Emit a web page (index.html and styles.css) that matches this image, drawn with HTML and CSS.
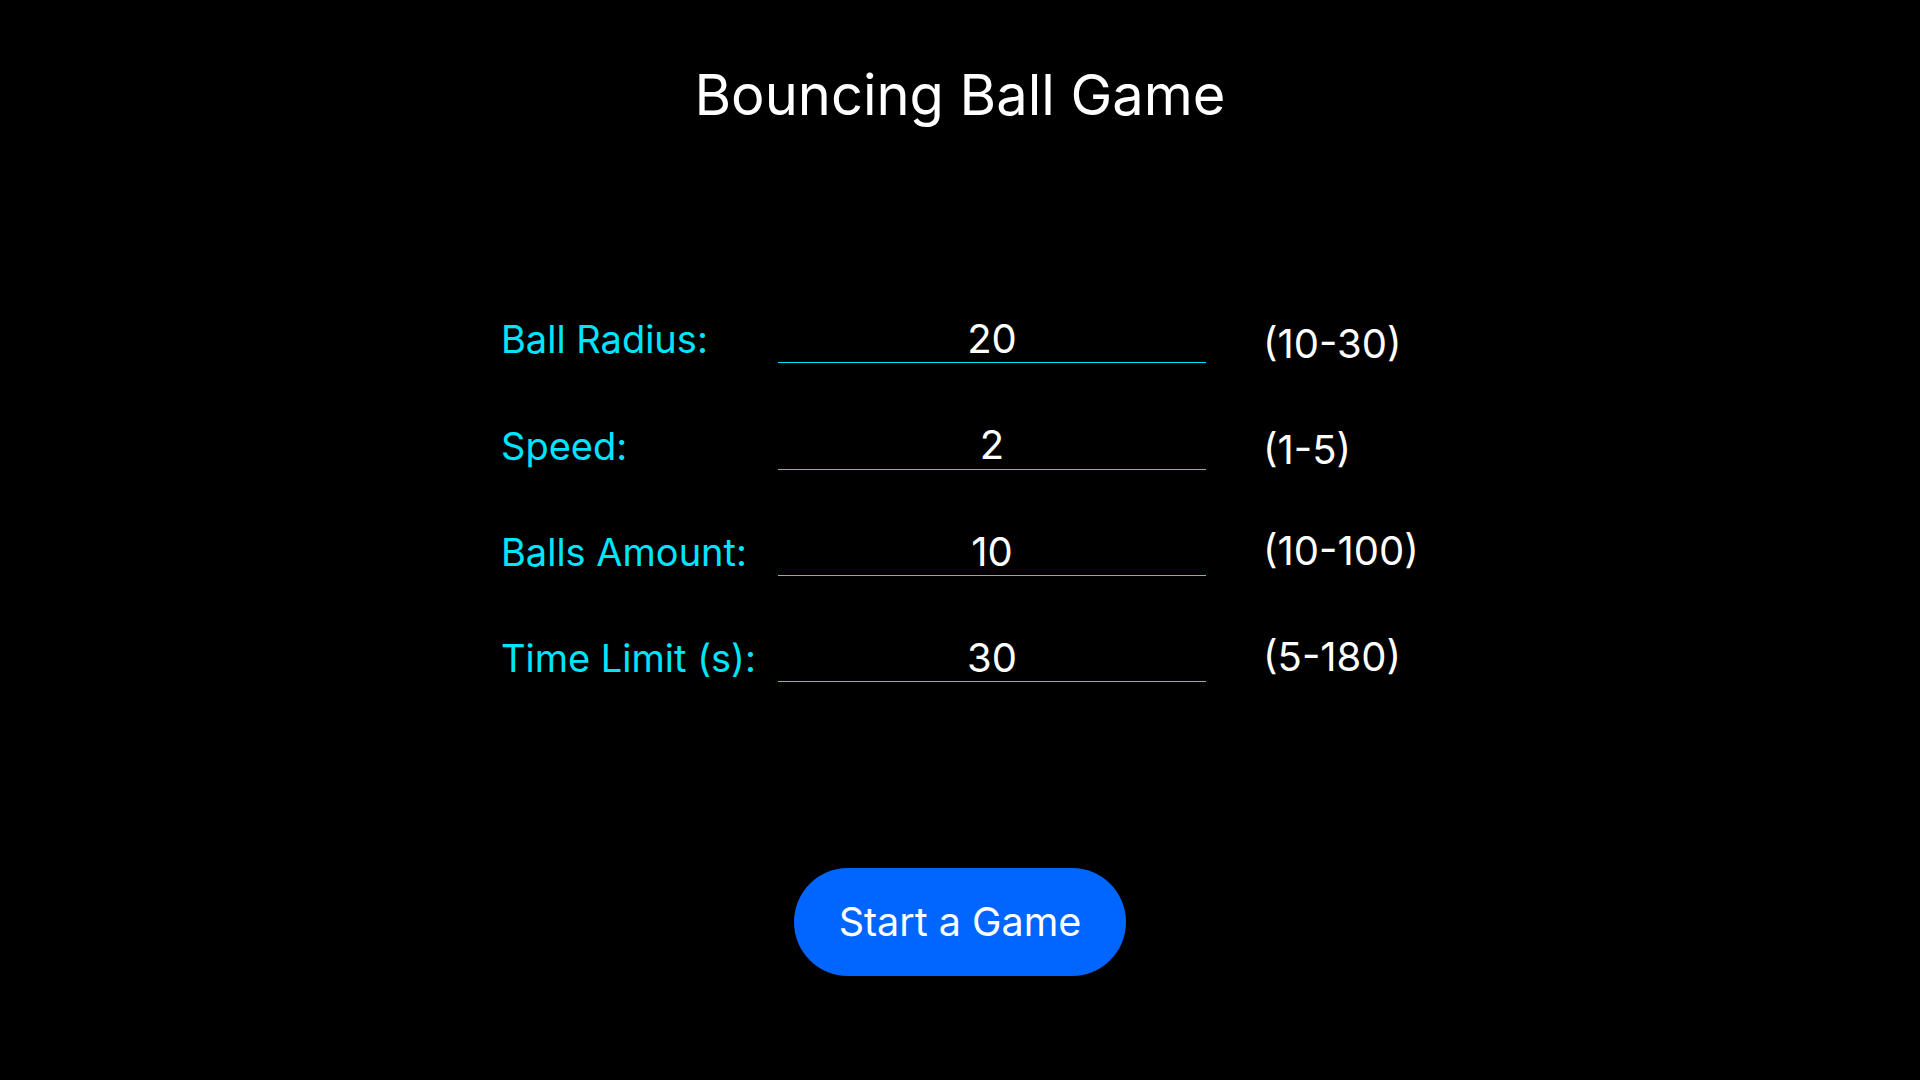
FILE: index.html
```html
<!DOCTYPE html>
<html lang="en">
<head>
<meta charset="utf-8">
<title>Bouncing Ball Game</title>
<link rel="stylesheet" href="styles.css">
</head>
<body>
<main class="page">
  <h1 class="title">Bouncing Ball Game</h1>
  <form class="settings">
    <div class="row">
      <label class="label" for="radius">Ball Radius:</label>
      <input class="field" id="radius" type="text" value="20">
      <span class="range range-low">(10-30)</span>
    </div>
    <div class="row">
      <label class="label" for="speed">Speed:</label>
      <input class="field" id="speed" type="text" value="2">
      <span class="range range-low">(1-5)</span>
    </div>
    <div class="row">
      <label class="label" for="amount">Balls Amount:</label>
      <input class="field" id="amount" type="text" value="10">
      <span class="range">(10-100)</span>
    </div>
    <div class="row">
      <label class="label" for="time">Time Limit (s):</label>
      <input class="field" id="time" type="text" value="30">
      <span class="range">(5-180)</span>
    </div>
  </form>
  <button class="start" type="button">Start a Game</button>
</main>
</body>
</html>
```

FILE: styles.css
```css
html, body {
  margin: 0;
  padding: 0;
  background: #000;
}

body {
  font-family: Inter, "Noto Sans", sans-serif;
  color: #fff;
  width: 1920px;
  height: 1080px;
  overflow: hidden;
}

.page {
  display: flex;
  flex-direction: column;
  align-items: center;
  padding-top: 61px;
}

.title {
  margin: 0;
  font-size: 56px;
  line-height: 68px;
  font-weight: 400;
  color: #fff;
}

.settings {
  margin-top: 185.4px;
  display: grid;
  row-gap: 57.33px;
}

.row {
  display: grid;
  grid-template-columns: 277px 428px 213px;
  align-items: start;
  height: 49px;
  font-size: 40px;
  line-height: 48px;
}

.label {
  padding-top: 1px;
  font-size: 38px;
  color: #00e5ff;
  white-space: nowrap;
}

.field {
  box-sizing: border-box;
  width: 428px;
  height: 49px;
  margin: 0;
  padding: 0;
  border: 0;
  border-bottom: 1px solid #00e5ff;
  background: transparent;
  color: #fff;
  font-family: inherit;
  font-size: 40px;
  line-height: 48px;
  text-align: center;
  outline: none;
}

.range {
  padding-left: 57px;
  color: #fff;
  white-space: nowrap;
}

.range-low {
  margin-top: 5.5px;
  margin-bottom: -5.5px;
}

.start {
  margin-top: 185.6px;
  width: 332px;
  height: 108px;
  border: 0;
  border-radius: 54px;
  background: #0066ff;
  color: #fff;
  font-family: inherit;
  font-size: 39.5px;
  font-weight: 400;
  padding: 0;
  cursor: pointer;
}
```
